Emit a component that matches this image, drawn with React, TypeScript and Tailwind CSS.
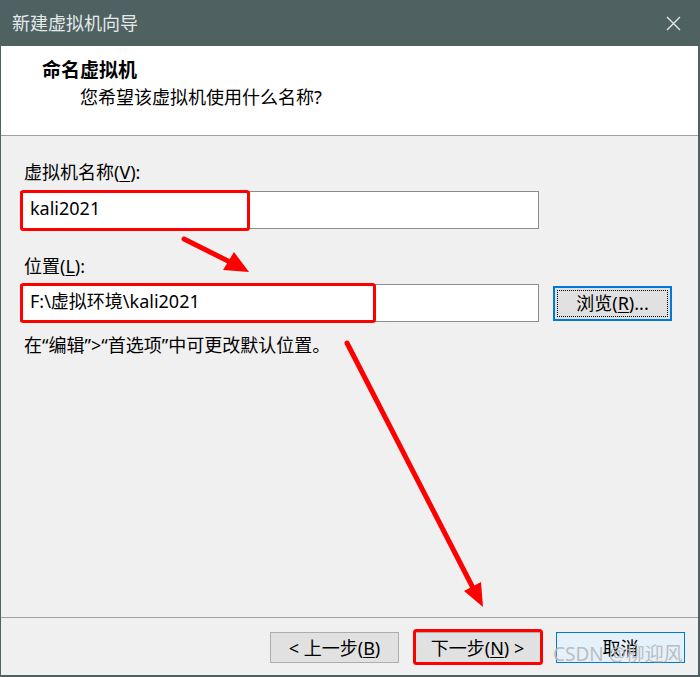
import React from "react";

const font = "font-['Noto_Sans','Noto_Sans_CJK_SC',sans-serif]";

function Key({ k }: { k: string }) {
  return <span className="underline underline-offset-2">{k}</span>;
}

function Button({ children, cls }: { children: React.ReactNode; cls: string }) {
  return (
    <div className={`w-[129px] h-[31px] flex items-center justify-center text-[18px] leading-[24px] text-black border ${cls}`}>
      {children}
    </div>
  );
}

export default function App() {
  return (
    <div className={`relative w-[700px] h-[677px] bg-[#4f6161] flex flex-col pl-px pr-[2px] pb-[2px] ${font}`}>
      {/* title bar */}
      <div className="h-[46px] flex items-center justify-between pl-[11px] pr-[17px] text-[18px] text-[#e4eaea]">
        <span>新建虚拟机向导</span>
        <svg className="w-[15px] h-[15px]" viewBox="0 0 15 15" fill="none" stroke="#e2e8e8" strokeWidth={1.4}>
          <path d="M1 1l13 13M14 1L1 14" />
        </svg>
      </div>

      <div className="flex-1 flex flex-col bg-[#f0f0f0]">
        {/* header */}
        <div className="h-[90px] bg-white border-b border-[#a0a0a0] pt-[12px]">
          <div className="pl-[41px] text-[19px] leading-[24px] font-bold text-black">命名虚拟机</div>
          <div className="pl-[79px] mt-[3px] text-[18px] leading-[24px] text-black">您希望该虚拟机使用什么名称?</div>
        </div>

        {/* body */}
        <div className="flex-1 flex flex-col px-[19px] pt-[24px]">
          <div className="pl-[4px] text-[18px] leading-[24px] text-black">
            虚拟机名称(<Key k="V" />):
          </div>
          <div className="mt-[7px] w-[519px] h-[38px] bg-white border border-[#8c8c8c] flex items-center pl-[9px] pb-[3px] text-[18px] text-black">
            kali2021
          </div>

          <div className="mt-[25px] pl-[4px] text-[18px] leading-[24px] text-black">
            位置(<Key k="L" />):
          </div>
          <div className="mt-[6px] flex items-center gap-[14px]">
            <div className="w-[519px] h-[38px] bg-white border border-[#8c8c8c] flex items-center pl-[9px] pb-[3px] text-[18px] text-black">
              F:\虚拟环境\kali2021
            </div>
            <div className="w-[119px] h-[35px] bg-[#e1e1e1] border-2 border-[#0078d7] p-[2px]">
              <div className="w-full h-full border border-dotted border-black flex items-center justify-center text-[18px] leading-[24px] text-black">
                浏览(<Key k="R" />)...
              </div>
            </div>
          </div>

          <div className="mt-[11px] pl-[4px] text-[18px] leading-[24px] text-black">
            在“编辑”&gt;“首选项”中可更改默认位置。
          </div>
        </div>

        {/* footer */}
        <div className="h-[58px] border-t border-[#a0a0a0] flex items-start justify-end gap-[14px] pt-[14px] pr-[13px]">
          <Button cls="bg-[#e1e1e1] border-[#adadad]">
            &lt; 上一步(<Key k="B" />)
          </Button>
          <Button cls="bg-[#e1e1e1] border-[#adadad]">
            下一步(<Key k="N" />) &gt;
          </Button>
          <Button cls="bg-[#e5f1fb] border-[#0078d7]">取消</Button>
        </div>
      </div>

      {/* annotations */}
      <svg className="absolute inset-0 pointer-events-none" width="700" height="677" viewBox="0 0 700 677">
        <g fill="none" stroke="#ff0000" strokeWidth={3}>
          <rect x="21.5" y="191.5" width="227" height="38" rx="2" />
          <rect x="21.5" y="284.5" width="353" height="37" rx="2" />
          <rect x="414.5" y="630.5" width="127" height="33" rx="2" />
        </g>
        <g stroke="#ff0000" strokeWidth={5} strokeLinecap="round">
          <line x1="184" y1="239" x2="230" y2="262" />
          <line x1="347" y1="343" x2="472" y2="586" />
        </g>
        <g fill="#ff0000">
          <polygon points="249,272 223,270 234,252" />
          <polygon points="483,607 464,591 481,582" />
        </g>
      </svg>

      {/* watermark */}
      <div className="absolute left-[553px] top-[641px] whitespace-nowrap text-[19px] leading-[26px] text-[#b8b8b8] opacity-90 pointer-events-none">
        CSDN @柳迎风
      </div>
    </div>
  );
}
